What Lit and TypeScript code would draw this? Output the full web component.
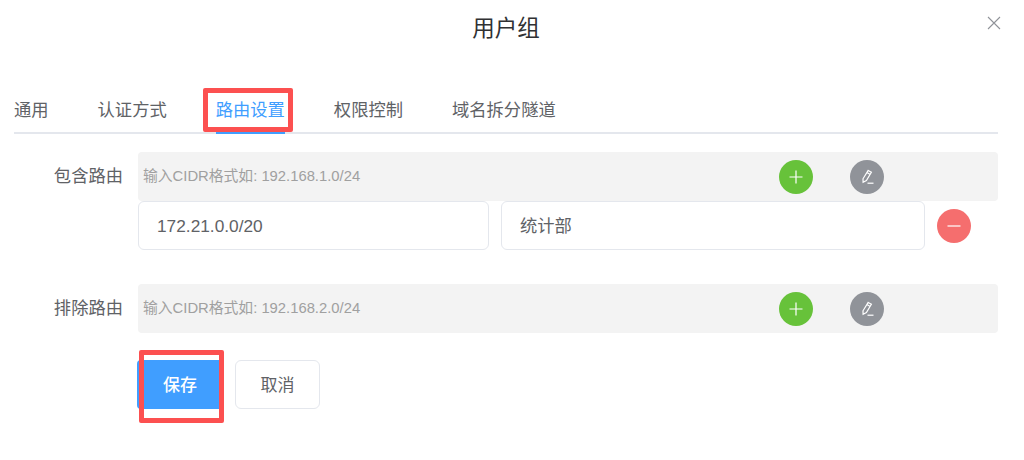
import { LitElement, html, css, svg } from "lit";
import { customElement, state } from "lit/decorators.js";

const plus = svg`<path d="M12 5.5v13M5.5 12h13" />`;
const minus = svg`<path d="M5.5 12h13" />`;
const pencil = svg`<path d="M13.2 5.4l3.2 1.8-5 8.4-3.3 1.7-.1-3.5zM12 7.6l3.2 1.9" /><path d="M12.5 18.2h6" />`;

@customElement("round-btn")
class RoundBtn extends LitElement {
  static properties = { kind: { type: String } };
  kind = "add";

  static styles = css`
    :host {
      display: block;
    }
    .btn {
      width: 34px;
      height: 34px;
      border-radius: 50%;
      display: flex;
      align-items: center;
      justify-content: center;
    }
    .add {
      background: #67c23a;
    }
    .edit {
      background: #909399;
    }
    .del {
      background: #f56c6c;
      opacity: 0.98;
    }
    svg {
      width: 24px;
      height: 24px;
      fill: none;
      stroke: #fff;
      stroke-width: 1.2;
    }
  `;

  render() {
    const icon = this.kind === "add" ? plus : this.kind === "edit" ? pencil : minus;
    return html`<div class="btn ${this.kind}">
      <svg viewBox="0 0 24 24">${icon}</svg>
    </div>`;
  }
}

@customElement("app-root")
class AppRoot extends LitElement {
  @state()
  tabs = ["通用", "认证方式", "路由设置", "权限控制", "域名拆分隧道"];

  static styles = css`
    :host {
      display: block;
      width: 1024px;
      height: 460px;
      background: #fff;
      color: #606266;
      font-family: "Liberation Sans", "Noto Sans CJK SC", sans-serif;
      font-size: 17.3px;
      overflow: hidden;
    }
    .dialog {
      position: relative;
      width: 1012px;
      padding-top: 13px;
    }
    .title {
      text-align: center;
      font-size: 22.5px;
      line-height: 32px;
      color: #303133;
    }
    .close {
      position: absolute;
      top: 16px;
      right: 11px;
      width: 14px;
      height: 14px;
      fill: none;
      stroke: #909399;
      stroke-width: 1.1;
    }
    .tabs {
      display: flex;
      gap: 49px;
      margin: 40px 14px 0 14px;
      width: 984px;
      height: 47px;
      border-bottom: 2px solid #e4e7ed;
    }
    .tab {
      position: relative;
      line-height: 24px;
      padding-top: 13px;
      height: 34px;
      margin-bottom: -2px;
      border-bottom: 2px solid transparent;
    }
    .tab.active {
      color: #409eff;
      border-bottom-color: #409eff;
    }
    .mark {
      position: absolute;
      border: 5px solid #fc5050;
      border-radius: 2px;
      box-sizing: border-box;
    }
    .tab .mark {
      left: -13px;
      right: -8px;
      top: 3px;
      height: 44px;
    }
    .form {
      display: grid;
      grid-template-columns: 109px 860px;
      column-gap: 15px;
      margin: 18px 0 0 14px;
    }
    .label {
      text-align: right;
      line-height: 49px;
      white-space: nowrap;
    }
    .bar {
      height: 49px;
      background: #f3f3f3;
      border-radius: 4px;
      display: flex;
      align-items: center;
      padding-left: 5px;
      font-size: 14.8px;
      line-height: 49px;
      color: #a0a0a0;
    }
    .placeholder {
      width: 636px;
      height: 49px;
    }
    .bar round-btn + round-btn {
      margin-left: 37px;
    }
    .entry {
      grid-column: 2;
      display: flex;
      align-items: center;
      height: 49px;
      margin-bottom: 34px;
    }
    .input {
      box-sizing: border-box;
      height: 49px;
      border: 1px solid #e4e7ed;
      border-radius: 6px;
      padding-left: 18px;
      line-height: 49px;
    }
    .input.cidr {
      width: 351px;
      margin-right: 12px;
    }
    .input.note {
      width: 424px;
      margin-right: 12px;
    }
    .actions {
      display: flex;
      gap: 12px;
      grid-column: 2;
      margin: 27px 0 0 -1px;
    }
    .btn {
      box-sizing: border-box;
      position: relative;
      height: 49px;
      padding-bottom: 3px;
      border-radius: 4px;
      display: flex;
      align-items: center;
      justify-content: center;
      font-size: 17px;
    }
    .save {
      width: 86px;
      background: #409eff;
      color: #fff;
      font-weight: 500;
    }
    .save .mark {
      left: 2px;
      top: -10px;
      width: 85px;
      height: 73px;
      box-shadow: inset 0 5px 0 #fff, inset 0 -9px 0 #fff;
    }
    .cancel {
      width: 85px;
      border: 1px solid #e4e7ed;
      border-radius: 6px;
      color: #606266;
    }
  `;

  render() {
    return html`<div class="dialog">
      <div class="title">用户组</div>
      <svg class="close" viewBox="0 0 14 14"><path d="M1 1l12 12M13 1L1 13" /></svg>
      <div class="tabs">
        ${this.tabs.map(
          (t, i) =>
            html`<div class="tab ${i === 2 ? "active" : ""}">
              ${t}${i === 2 ? html`<div class="mark"></div>` : ""}
            </div>`
        )}
      </div>
      <div class="form">
        <div class="label">包含路由</div>
        <div class="bar">
          <div class="placeholder">输入CIDR格式如: 192.168.1.0/24</div>
          <round-btn kind="add"></round-btn>
          <round-btn kind="edit"></round-btn>
        </div>
        <div class="entry">
          <div class="input cidr">172.21.0.0/20</div>
          <div class="input note">统计部</div>
          <round-btn kind="del"></round-btn>
        </div>
        <div class="label">排除路由</div>
        <div class="bar">
          <div class="placeholder">输入CIDR格式如: 192.168.2.0/24</div>
          <round-btn kind="add"></round-btn>
          <round-btn kind="edit"></round-btn>
        </div>
        <div class="actions">
          <div class="btn save">保存<div class="mark"></div></div>
          <div class="btn cancel">取消</div>
        </div>
      </div>
    </div>`;
  }
}
